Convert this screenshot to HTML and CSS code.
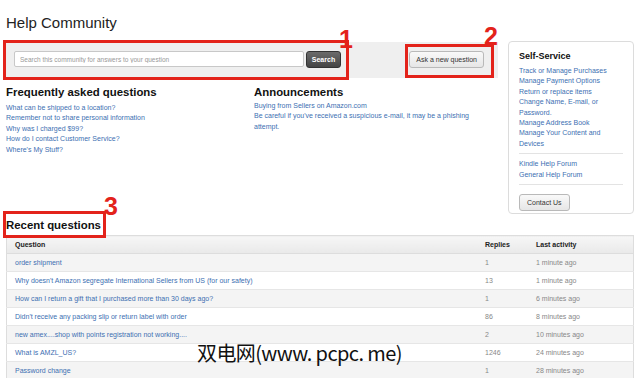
FILE: index.html
```html
<!DOCTYPE html>
<html lang="en">
<head>
    <meta charset="UTF-8">
    <meta name="viewport" content="width=device-width, initial-scale=1.0">
    <title>Help Community</title>
    <link rel="stylesheet" href="styles.css">
</head>
<body>
    <div class="page">
        <h1 class="page-title">Help Community</h1>

        <div class="top">
            <div class="main">
                <div class="search-band">
                    <form class="search-form" onsubmit="return false">
                        <input type="text" class="search-input" placeholder="Search this community for answers to your question">
                        <button class="btn-dark">Search</button>
                    </form>
                    <button class="btn">Ask a new question</button>
                </div>

                <div class="info-cols">
                    <div class="faq">
                        <h2>Frequently asked questions</h2>
                        <ul class="links">
                            <li><a href="#">What can be shipped to a location?</a></li>
                            <li><a href="#">Remember not to share personal information</a></li>
                            <li><a href="#">Why was I charged $99?</a></li>
                            <li><a href="#">How do I contact Customer Service?</a></li>
                            <li><a href="#">Where's My Stuff?</a></li>
                        </ul>
                    </div>
                    <div class="announcements">
                        <h2>Announcements</h2>
                        <ul class="links">
                            <li><a href="#">Buying from Sellers on Amazon.com</a></li>
                            <li><a href="#">Be careful if you've received a suspicious e-mail, it may be a phishing attempt.</a></li>
                        </ul>
                    </div>
                </div>
            </div>

            <aside class="self-service">
                <h3>Self-Service</h3>
                <ul class="links">
                    <li><a href="#">Track or Manage Purchases</a></li>
                    <li><a href="#">Manage Payment Options</a></li>
                    <li><a href="#">Return or replace items</a></li>
                    <li><a href="#">Change Name, E-mail, or Password.</a></li>
                    <li><a href="#">Manage Address Book</a></li>
                    <li><a href="#">Manage Your Content and Devices</a></li>
                </ul>
                <hr>
                <ul class="links">
                    <li><a href="#">Kindle Help Forum</a></li>
                    <li><a href="#">General Help Forum</a></li>
                </ul>
                <hr>
                <button class="btn">Contact Us</button>
            </aside>
        </div>

        <div class="recent">
            <h2>Recent questions</h2>
            <table class="questions">
                <thead>
                    <tr><th class="col-q">Question</th><th class="col-r">Replies</th><th class="col-a">Last activity</th></tr>
                </thead>
                <tbody id="rows"></tbody>
            </table>
        </div>

        <!-- annotations on top of the screenshot -->
        <div class="mark mark-1"></div>
        <div class="mark-num num-1">1</div>
        <div class="mark mark-2"></div>
        <div class="mark-num num-2">2</div>
        <div class="mark mark-3"></div>
        <div class="mark-num num-3">3</div>
        <div class="watermark">双电网(www. pcpc. me)</div>
    </div>

    <script>
        const questions = [
            ["order shipment", "1", "1 minute ago"],
            ["Why doesn't Amazon segregate International Sellers from US (for our safety)", "13", "1 minute ago"],
            ["How can I return a gift that I purchased more than 30 days ago?", "1", "6 minutes ago"],
            ["Didn't receive any packing slip or return label with order", "86", "8 minutes ago"],
            ["new amex....shop with points registration not working....", "2", "10 minutes ago"],
            ["What is AMZL_US?", "1246", "24 minutes ago"],
            ["Password change", "1", "28 minutes ago"]
        ];
        const rows = document.getElementById('rows');
        questions.forEach(q => {
            const tr = document.createElement('tr');
            tr.innerHTML = `<td><a href="#">${q[0]}</a></td><td class="muted">${q[1]}</td><td class="muted">${q[2]}</td>`;
            rows.appendChild(tr);
        });
    </script>
</body>
</html>
```

FILE: styles.css
```css
body {
    margin: 0;
    font-family: "Liberation Sans", Arial, sans-serif;
    color: #111;
    background: #fff;
}

.page {
    position: relative;
    padding: 0 6px;
    height: 378px;
    overflow: hidden;
}

a {
    color: #3d6fb2;
    text-decoration: none;
}

ul.links {
    list-style: none;
    margin: 0;
    padding: 0;
    font-size: 7px;
    line-height: 10.4px;
}

.page-title {
    margin: 0;
    padding-top: 14px;
    font-size: 15px;
    line-height: 18px;
    font-weight: normal;
    color: #222;
}

.top {
    display: grid;
    grid-template-columns: 492px 126px;
    gap: 10px;
    margin-top: 9px;
}

.search-band {
    display: flex;
    align-items: flex-start;
    justify-content: space-between;
    height: 36px;
    box-sizing: border-box;
    margin-top: 1px;
    padding: 9px 14px 0 8px;
    background: #efefef;
}

.search-form {
    display: flex;
    gap: 2px;
    margin: 0;
}

.search-input {
    width: 290px;
    height: 16px;
    box-sizing: border-box;
    margin: 0;
    padding: 0 5px;
    border: 1px solid #c8c8c8;
    border-radius: 2px;
    font-family: inherit;
    font-size: 6.5px;
}

.search-input::placeholder {
    color: #999;
}

.btn-dark {
    width: 35px;
    height: 17px;
    padding: 0;
    border: 1px solid #333;
    border-radius: 3px;
    background: linear-gradient(#6b6b6b, #444);
    color: #fff;
    font-family: inherit;
    font-size: 7px;
    font-weight: bold;
}

.btn {
    height: 17px;
    padding: 0 6px;
    border: 1px solid #b9b9b9;
    border-radius: 3px;
    background: linear-gradient(#f9f9f9, #e6e6e6);
    color: #333;
    font-family: inherit;
    font-size: 7px;
}

.info-cols {
    display: grid;
    grid-template-columns: 248px 1fr;
    margin-top: 7px;
}

.info-cols h2,
.recent h2 {
    margin: 0;
    font-size: 11.4px;
    line-height: 14px;
    font-weight: bold;
    color: #111;
}

.faq .links {
    margin-top: 4px;
}

.announcements .links {
    margin-top: 2px;
    padding-right: 20px;
}

.self-service {
    height: 173px;
    box-sizing: border-box;
    padding: 9px 10px 0;
    border: 1px solid #dcdcdc;
    border-radius: 4px;
}

.self-service h3 {
    margin: 0 0 4px;
    font-size: 9px;
    line-height: 11px;
    color: #111;
}

.self-service .links {
    padding-right: 8px;
}

.self-service hr {
    margin: 4px 0 5px;
    border: 0;
    border-top: 1px solid #e3e3e3;
}

.self-service hr + .btn {
    margin-top: 4px;
    padding: 0 7px;
}

.recent {
    margin-top: 4px;
}

.recent h2 {
    margin-bottom: 3px;
}

.questions {
    width: 100%;
    border-collapse: collapse;
    border: 1px solid #ddd;
    font-size: 7px;
}

.questions th {
    height: 17px;
    padding: 0 8px;
    background: linear-gradient(#f6f6f6, #e9e9e9);
    border-bottom: 1px solid #ddd;
    text-align: left;
    color: #222;
}

.questions td {
    height: 17px;
    padding: 0 8px;
    border-bottom: 1px solid #e6e6e6;
}

.questions tbody tr:nth-child(odd) {
    background: #f4f4f4;
}

.questions .col-r {
    width: 35px;
}

.questions .col-a {
    width: 89px;
}

.questions .muted {
    color: #888;
}

.mark {
    position: absolute;
    border: 3px solid #e3231b;
    box-sizing: border-box;
}

.mark-1 {
    left: 3px;
    top: 40px;
    width: 346px;
    height: 40px;
}

.mark-2 {
    left: 405px;
    top: 44px;
    width: 89px;
    height: 34px;
}

.mark-3 {
    left: 3px;
    top: 211px;
    width: 103px;
    height: 27px;
}

.mark-num {
    position: absolute;
    color: #e3231b;
    font-size: 25px;
    line-height: 25px;
    font-weight: bold;
}

.num-1 {
    left: 339px;
    top: 27px;
}

.num-2 {
    left: 484px;
    top: 24px;
}

.num-3 {
    left: 104px;
    top: 194px;
}

.watermark {
    position: absolute;
    left: 197px;
    top: 340px;
    font-family: "Noto Sans CJK SC", "Liberation Sans", sans-serif;
    font-size: 20px;
    line-height: 26px;
    letter-spacing: -0.6px;
    color: #111;
}
```
